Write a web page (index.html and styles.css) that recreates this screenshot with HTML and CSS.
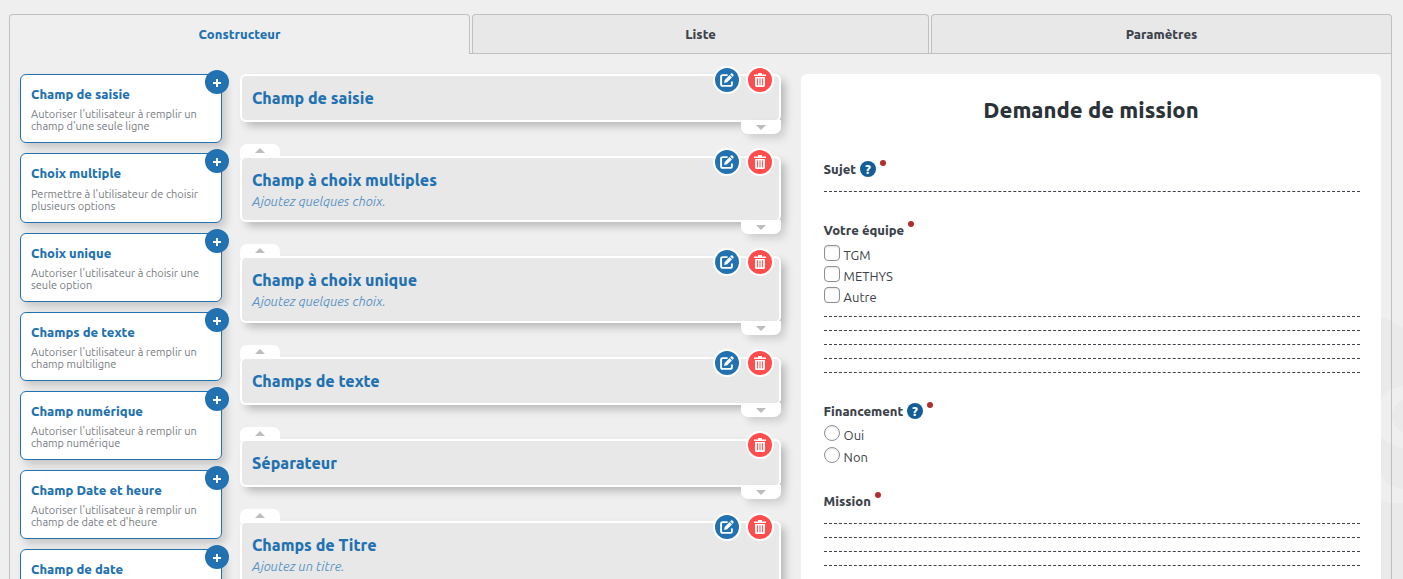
FILE: index.html
```html
<!DOCTYPE html>
<html lang="fr">
<head>
<meta charset="utf-8">
<title>Constructeur de formulaire</title>
<link rel="stylesheet" href="styles.css">
</head>
<body>
<svg class="defs" width="0" height="0" aria-hidden="true">
  <symbol id="plus" viewBox="0 0 8 8"><path d="M4 0v8M0 4h8" stroke="#fff" stroke-width="2" fill="none"/></symbol>
  <symbol id="edit" viewBox="0 0 14 14"><path d="M7.6 2.1H2.8Q1.1 2.1 1.1 3.8V11.2Q1.1 12.9 2.8 12.9H10.2Q11.9 12.9 11.9 11.2V8.4" fill="none" stroke="#fff" stroke-width="1.9"/><path d="M4.1 9.9L4.7 6.9L9.6 2L12 4.4L7.1 9.3ZM10.2 1.4L11 .6Q11.7 0 12.4.6L13.4 1.6Q14 2.3 13.4 3L12.6 3.8Z" fill="#fff"/></symbol>
  <symbol id="trash" viewBox="0 0 12 14"><path d="M4 1.4V0H8V1.4H12V3H0V1.4ZM1 4H11V12.4Q11 14 9.4 14H2.6Q1 14 1 12.4Z" fill="#fff"/><path d="M3.6 5.3V12.3M6 5.3V12.3M8.4 5.3V12.3" stroke="#ff4d4d" stroke-width="1"/></symbol>
</svg>
<svg class="watermark" viewBox="0 0 22 279" aria-hidden="true">
  <path d="M0 17Q12 21 22 28V279H0Z" fill="#eaeaea"/>
  <path d="M0 98Q9 87 22 86V100Q11 105 11 116Q11 126 22 132V148Q10 146 0 137Z" fill="#efefef"/>
  <path d="M0 177Q9 187 22 189V203Q9 204 0 200Z" fill="#efefef"/>
</svg>
<div class="page">
  <nav class="tabs">
    <a class="tab tab-active">Constructeur</a>
    <a class="tab">Liste</a>
    <a class="tab">Paramètres</a>
  </nav>
  <main class="panel">
    <section class="palette">
      <article class="tool"><h3>Champ de saisie</h3><p>Autoriser l'utilisateur à remplir un<br>champ d'une seule ligne</p><span class="add"><svg><use href="#plus"/></svg></span></article>
      <article class="tool tool-tall"><h3>Choix multiple</h3><p>Permettre à l'utilisateur de choisir<br>plusieurs options</p><span class="add"><svg><use href="#plus"/></svg></span></article>
      <article class="tool"><h3>Choix unique</h3><p>Autoriser l'utilisateur à choisir une<br>seule option</p><span class="add"><svg><use href="#plus"/></svg></span></article>
      <article class="tool"><h3>Champs de texte</h3><p>Autoriser l'utilisateur à remplir un<br>champ multiligne</p><span class="add"><svg><use href="#plus"/></svg></span></article>
      <article class="tool"><h3>Champ numérique</h3><p>Autoriser l'utilisateur à remplir un<br>champ numérique</p><span class="add"><svg><use href="#plus"/></svg></span></article>
      <article class="tool"><h3>Champ Date et heure</h3><p>Autoriser l'utilisateur à remplir un<br>champ de date et d'heure</p><span class="add"><svg><use href="#plus"/></svg></span></article>
      <article class="tool"><h3>Champ de date</h3><span class="add"><svg><use href="#plus"/></svg></span></article>
    </section>

    <section class="fields">
      <article class="field"><h2>Champ de saisie</h2>
        <span class="actions"><span class="btn"><svg class="i-edit"><use href="#edit"/></svg></span><span class="btn btn-del"><svg class="i-trash"><use href="#trash"/></svg></span></span><span class="move down"></span></article>
      <article class="field field-hint"><h2>Champ à choix multiples</h2><p>Ajoutez quelques choix.</p>
        <span class="move up"></span><span class="actions"><span class="btn"><svg class="i-edit"><use href="#edit"/></svg></span><span class="btn btn-del"><svg class="i-trash"><use href="#trash"/></svg></span></span><span class="move down"></span></article>
      <article class="field field-hint field-tall"><h2>Champ à choix unique</h2><p>Ajoutez quelques choix.</p>
        <span class="move up"></span><span class="actions"><span class="btn"><svg class="i-edit"><use href="#edit"/></svg></span><span class="btn btn-del"><svg class="i-trash"><use href="#trash"/></svg></span></span><span class="move down"></span></article>
      <article class="field"><h2>Champs de texte</h2>
        <span class="move up"></span><span class="actions"><span class="btn"><svg class="i-edit"><use href="#edit"/></svg></span><span class="btn btn-del"><svg class="i-trash"><use href="#trash"/></svg></span></span><span class="move down"></span></article>
      <article class="field"><h2>Séparateur</h2>
        <span class="move up"></span><span class="actions"><span class="btn btn-del"><svg class="i-trash"><use href="#trash"/></svg></span></span><span class="move down"></span></article>
      <article class="field field-hint"><h2>Champs de Titre</h2><p>Ajoutez un titre.</p>
        <span class="move up"></span><span class="actions"><span class="btn"><svg class="i-edit"><use href="#edit"/></svg></span><span class="btn btn-del"><svg class="i-trash"><use href="#trash"/></svg></span></span></article>
    </section>

    <section class="preview">
      <h1>Demande de mission</h1>
      <div class="question">
        <div class="label"><span class="label-text w-sujet">Sujet</span><span class="help">?</span><i class="required"></i></div>
        <div class="lines lines-single"><hr></div>
      </div>
      <div class="question q-team">
        <div class="label"><span class="label-text w-team">Votre équipe</span><i class="required"></i></div>
        <div class="options">
          <label class="option"><span class="box"></span>TGM</label>
          <label class="option"><span class="box"></span>METHYS</label>
          <label class="option"><span class="box"></span>Autre</label>
        </div>
        <div class="lines lines-team"><hr><hr><hr><hr><hr></div>
      </div>
      <div class="question q-finance">
        <div class="label"><span class="label-text w-finance">Financement</span><span class="help">?</span><i class="required"></i></div>
        <div class="options radios">
          <label class="option"><span class="box box-round"></span>Oui</label>
          <label class="option"><span class="box box-round"></span>Non</label>
        </div>
      </div>
      <div class="question q-mission">
        <div class="label"><span class="label-text w-mission">Mission</span><i class="required"></i></div>
        <div class="lines lines-mission"><hr><hr><hr><hr></div>
      </div>
    </section>
  </main>
</div>
</body>
</html>
```
FILE: styles.css
```css
* { box-sizing: border-box; }
html, body { margin: 0; height: 579px; overflow: hidden; }
body {
  background: #efefef;
  color: #3c434a;
  font-family: Ubuntu, "Noto Sans", sans-serif;
  font-size: 13px;
}
h1, h2, h3, p { margin: 0; white-space: nowrap; }
h1, h2, h3 { font-weight: 800; }
.defs { position: absolute; }
.watermark { position: absolute; left: 1381px; top: 300px; width: 22px; height: 279px; }
.page { position: relative; height: 579px; overflow: hidden; padding: 14px 11px 0 9px; }

.tabs { display: flex; gap: 2px; height: 39px; }
.tab {
  flex: 0 0 461px;
  height: 39px;
  border: 1px solid #c0c0c0;
  border-bottom: 0;
  border-radius: 4px 4px 0 0;
  background: #e8e8e8;
  font-weight: 800;
  line-height: 39px;
  text-align: center;
}
.tab:nth-child(2) { flex-basis: 457px; }
.tab-active { position: relative; z-index: 1; height: 40px; background: #efefef; color: #2271b1; }

.panel {
  display: flex;
  height: 526px;
  padding: 20px 10px 0;
  border: 1px solid #c0c0c0;
  border-bottom: 0;
}

.palette { display: flex; flex-direction: column; gap: 10px; width: 202px; margin-right: 18px; }
.tool {
  position: relative;
  flex: none;
  height: 69px;
  padding: 10px;
  border: 1px solid #2271b1;
  border-radius: 6px;
  background: #fff;
  box-shadow: 4px 5px 9px rgba(0, 0, 0, .17);
}
.tool-tall { height: 70px; }
.tool h3 { color: #2271b1; font-size: 13px; line-height: 18px; }
.tool p { margin-top: 5px; color: #787c82; font-size: 11px; line-height: 12px; }
.tool-tall p { margin-top: 6px; }
.add {
  position: absolute;
  top: -5px;
  right: -8px;
  display: grid;
  place-items: center;
  width: 24px;
  height: 24px;
  border-radius: 50%;
  background: #2271b1;
}
.add svg { width: 8px; height: 8px; margin-top: 2px; }

.fields { display: flex; flex-direction: column; gap: 34px; width: 541px; margin-right: 20px; }
.field {
  position: relative;
  flex: none;
  height: 48px;
  padding: 11px 10px;
  border: 2px solid #fff;
  border-radius: 6px;
  background: #e8e8e8;
  box-shadow: 5px 5px 8px -1px rgba(0, 0, 0, .24);
}
.field-hint { height: 66px; }
.field-tall { height: 67px; }
.field h2 { color: #2271b1; font-size: 16px; line-height: 22px; }
.field p { color: #5b94c4; font-size: 13px; font-style: italic; letter-spacing: .06px; line-height: 20px; }
.move { position: absolute; width: 40px; height: 14px; background: #fff; }
.move::after { content: ""; position: absolute; border: 5px solid transparent; }
.up { top: -14px; left: -2px; border-radius: 7px 7px 0 0; }
.up::after { left: 15px; top: -1px; border-bottom-color: #bdbdbd; }
.down { bottom: -14px; right: -2px; border-radius: 0 0 7px 7px; box-shadow: 5px 5px 8px -1px rgba(0, 0, 0, .15); }
.down::after { left: 15px; top: 5px; border-top-color: #bdbdbd; }
.actions { position: absolute; z-index: 1; top: -10px; right: 5px; display: flex; gap: 5px; }
.btn {
  display: grid;
  place-items: center;
  width: 28px;
  height: 28px;
  border: 2px solid #fff;
  border-radius: 50%;
  background: #2271b1;
}
.btn-del { background: #ff4d4d; }
.i-edit { width: 14px; height: 14px; }
.i-trash { width: 12px; height: 14px; }

.preview { width: 580px; padding: 20px 21px 0 23px; border-radius: 6px 6px 0 0; background: #fff; }
.preview h1 { margin-right: 2px; color: #2c3338; font-size: 22px; line-height: 32px; text-align: center; }
.question { padding-top: 33px; }
.label { display: flex; align-items: center; height: 20px; font-weight: 800; white-space: nowrap; }
.label-text { flex: none; text-indent: -.5px; }
.w-sujet { width: 33px; }
.w-team { width: 80px; }
.w-finance { width: 80px; }
.w-mission { width: 47px; }
.help {
  width: 16px;
  height: 16px;
  margin-left: 3px;
  border-radius: 50%;
  background: #135e96;
  color: #fff;
  font-size: 13px;
  line-height: 16px;
  text-align: center;
}
.required { width: 6px; height: 6px; margin: 0 0 12px 4px; border-radius: 50%; background: #b32d2e; }
.lines { display: flex; flex-direction: column; gap: 13px; }
.lines hr { width: 100%; height: 1px; margin: 0; border: 0; border-top: 1px dashed #3c434a; }
.lines-single { padding-top: 12px; }
.q-team { padding-top: 28px; }
.options { display: flex; flex-direction: column; gap: 5px; padding-top: 5px; }
.option { display: flex; gap: 3.6px; height: 16px; line-height: 20px; }
.box {
  width: 16px;
  height: 16px;
  border: 1px solid #8c8f94;
  border-radius: 4px;
  background: #fff;
  box-shadow: inset 0 1px 2px rgba(0, 0, 0, .1);
}
.box-round { border-radius: 50%; }
.lines-team { padding-top: 13px; }
.q-finance { padding-top: 28px; }
.radios { gap: 6px; padding-top: 4px; }
.q-mission { padding-top: 28px; }
.lines-mission { padding-top: 12px; }
```
